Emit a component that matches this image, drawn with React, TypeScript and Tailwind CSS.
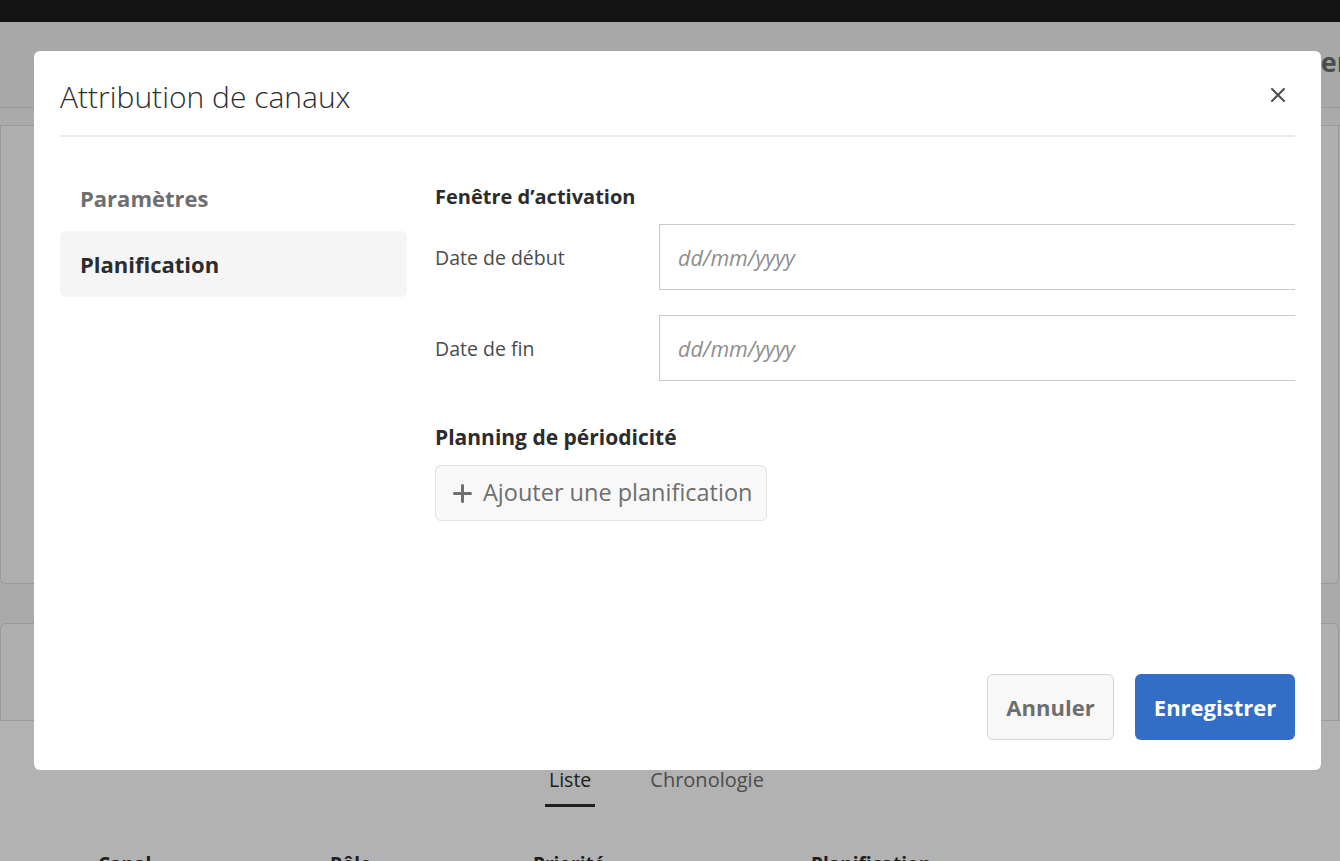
import React from "react";

const font = "font-['Open_Sans','Noto_Sans',sans-serif]";

function CloseIcon() {
  return (
    <svg width="16" height="16" viewBox="0 0 16 16" fill="none">
      <path d="M2 2L14 14M14 2L2 14" stroke="#4b4b4b" strokeWidth="2" strokeLinecap="round" />
    </svg>
  );
}

function PlusIcon() {
  return (
    <svg width="19" height="19" viewBox="0 0 19 19" fill="none">
      <path d="M9.5 1.5V17.5M1.5 9.5H17.5" stroke="#6e6e6e" strokeWidth="3" strokeLinecap="round" />
    </svg>
  );
}

function DateRow({ label }: { label: string }) {
  return (
    <div className="flex items-center">
      <label className="w-[224px] shrink-0 pt-[2px] text-[19.5px] text-[#4b4b4b]">{label}</label>
      <input
        type="text"
        placeholder="dd/mm/yyyy"
        className="h-[66px] w-[700px] shrink-0 border border-[#cacaca] bg-white px-[18px] text-[21.5px] italic text-[#2c2c2c] placeholder:text-[#8e8e8e] outline-none"
      />
    </div>
  );
}

export default function App() {
  return (
    <div className={`relative h-[861px] overflow-hidden bg-[#f4f4f4] ${font}`}>
      {/* Page behind the dialog */}
      <div className="h-[22px] bg-[#1e1e1e]" />
      <div className="flex h-[86px] items-center justify-end overflow-hidden whitespace-nowrap border-b border-[#dcdcdc] bg-[#f1f1f1]">
        <span className="-mr-[9px] pb-[4px] text-[27px] font-bold text-[#6e6e6e]">Enregistrer</span>
      </div>
      <div className="h-[18px] border-b border-[#dcdcdc]" />
      <div className="w-[1339px]">
        <div className="h-[458px] rounded-b-md border border-t-0 border-[#dcdcdc] bg-[#fbfbfb]" />
        <div className="h-[39px]" />
        <div className="h-[97px] rounded-t-md border border-b-0 border-[#dcdcdc] bg-[#fbfbfb]" />
      </div>
      <div className="border-t border-[#dcdcdc] bg-white">
        <div className="flex gap-[59px] pl-[549px] pt-[44px]">
          <div className="relative text-[19.5px] text-[#2c2c2c]">
            Liste
            <div className="absolute -left-[4px] -right-[4px] top-[39px] h-[3px] bg-[#2c2c2c]" />
          </div>
          <div className="text-[20px] text-[#6e6e6e]">Chronologie</div>
        </div>
        <div className="grid grid-cols-[232px_203px_278px_200px] pl-[98px] pt-[55px] text-[19px] font-bold text-[#2c2c2c]">
          <div>Canal</div>
          <div>Rôle</div>
          <div>Priorité</div>
          <div>Planification</div>
        </div>
      </div>

      {/* Overlay */}
      <div className="fixed inset-0 bg-black/30" />

      {/* Dialog */}
      <div className="fixed left-[34px] top-[51px] flex h-[719px] w-[1287px] flex-col rounded-md bg-white px-[26px] pb-[30px]">
        <div className="flex items-center justify-between border-b-2 border-[#eaeaea] pt-[26px] pb-[18px]">
          <h2 className="text-[30px] font-light leading-[40px] text-[#2c2c2c]">Attribution de canaux</h2>
          <button className="mb-[4px] mr-[1px] flex h-8 w-8 items-center justify-center">
            <CloseIcon />
          </button>
        </div>

        <div className="flex gap-[28px] pt-[28px]">
          <nav className="w-[347px] shrink-0">
            <div className="flex h-[66px] items-center rounded-md px-[20px] text-[22px] font-bold text-[#6e6e6e]">
              Paramètres
            </div>
            <div className="flex h-[66px] items-center rounded-md bg-[#f5f5f5] px-[20px] text-[22px] font-bold text-[#2c2c2c]">
              Planification
            </div>
          </nav>

          <div className="min-w-0 flex-1 overflow-hidden">
            <h3 className="pt-[18px] text-[20px] font-bold leading-[28px] text-[#2c2c2c]">Fenêtre d’activation</h3>
            <div className="mt-[13px] flex flex-col gap-[25px]">
              <DateRow label="Date de début" />
              <DateRow label="Date de fin" />
            </div>
            <h3 className="mt-[42px] text-[21px] font-bold leading-[28px] text-[#2c2c2c]">Planning de périodicité</h3>
            <button className="mt-[14px] flex h-[56px] items-center gap-[11px] rounded-md border border-[#e1e1e1] bg-[#f8f8f8] pl-[17px] pr-[14px] text-[23.5px] text-[#6e6e6e]">
              <PlusIcon />
              Ajouter une planification
            </button>
          </div>
        </div>

        <div className="mt-auto flex justify-end gap-[21px]">
          <button className="h-[66px] w-[127px] rounded-md border border-[#d5d5d5] bg-[#f8f8f8] text-[22px] font-bold text-[#6e6e6e]">
            Annuler
          </button>
          <button className="h-[66px] w-[160px] rounded-md bg-[#326ec8] text-[22px] font-bold text-white">
            Enregistrer
          </button>
        </div>
      </div>
    </div>
  );
}
